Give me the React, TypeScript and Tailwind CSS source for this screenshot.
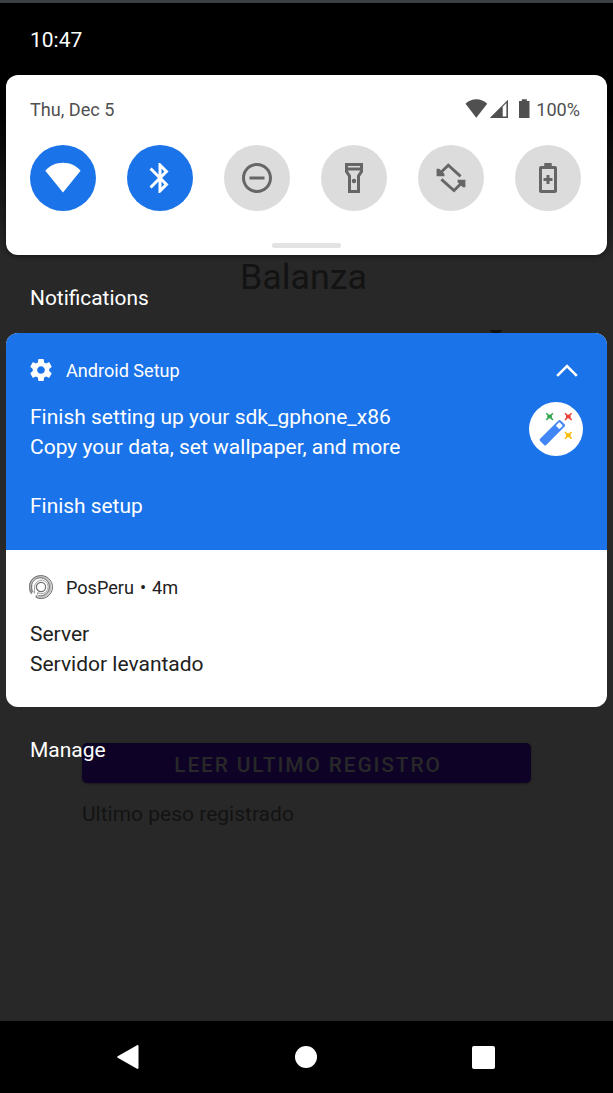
import type { ReactNode } from "react";

function Tile({ active, children }: { active?: boolean; children: ReactNode }) {
  return (
    <button
      className={`flex size-[66px] items-center justify-center rounded-full ${
        active ? "bg-[#1a73e8] text-white" : "bg-[#dcdcdc] text-[#666666]"
      }`}
    >
      <svg viewBox="0 0 24 24" className="size-[36px] overflow-visible" fill="currentColor">
        {children}
      </svg>
    </button>
  );
}

function Background() {
  return (
    <div className="absolute inset-x-0 top-[66px] flex h-[955px] flex-col items-center bg-[#282828] pt-[190px] text-[#131313]">
      <div className="h-[74px] text-[35.8px] leading-[42px] -translate-x-[3px]">Balanza</div>
      <div className="flex h-[345px] w-full justify-end pr-[110px]">
        <svg viewBox="0 0 14 7" className="h-[7px] w-[14px]">
          <path d="M0 0h14L7 7z" fill="#111" />
        </svg>
      </div>
      <div className="mt-[68px] flex h-[40px] w-[449px] shrink-0 items-center justify-center rounded-[5px] bg-[#0e0326] pl-[3px] pt-[3px] text-[20.9px] font-medium leading-[24px] tracking-[1.86px] text-[#282828] shadow-[0_1px_2px_#1a1a1a]">
        LEER ULTIMO REGISTRO
      </div>
      <div className="mt-[19px] w-[449px] text-[21px] leading-[25px]">Ultimo peso registrado</div>
    </div>
  );
}

export default function App() {
  return (
    <div
      className="relative h-[1093px] w-[613px] overflow-hidden bg-black text-[21px] leading-[24px]"
      style={{ fontFamily: 'Roboto, "Liberation Sans", sans-serif' }}
    >
      <Background />
      <div className="absolute inset-x-0 top-[66px] h-[190px] bg-linear-to-b from-black from-20% to-transparent" />
      <div className="relative flex h-full flex-col">
        <header className="flex h-[75px] flex-col border-t-[3px] border-[#3a3f43] bg-black pl-[30px] pt-[25px] text-white">
          10:47
        </header>

        <section className="mx-[6px] h-[180px] rounded-[12px] bg-white shadow-[0_1px_5px_rgba(0,0,0,0.5)]">
          <div className="flex items-center justify-between pl-[24px] pr-[27px] pt-[24px] text-[18.1px] leading-[22px] text-[#505050]">
            <span>Thu, Dec 5</span>
            <span className="flex items-center">
              <svg viewBox="0 0 65 22" className="mr-[6px] h-[22px] w-[65px]" fill="#505050">
                <path d="M.5 4.700C3.500 1.700 7 .2 11.300.2s7.900 1.500 10.900 4.500L11.300 18.800z" />
                <path fillRule="evenodd" d="M24.800 19 43 .8V19zM37.700 7.800V17.500H41.400V4.100z" />
                <path d="M54 2h2.800V.2h5V2h2.700v17H54z" />
              </svg>
              100%
            </span>
          </div>
          <div className="mt-[24px] flex justify-between pl-[24px] pr-[26px]">
            <Tile active>
              <path d="M.2 7.100C3.400 3.700 7.400 1.900 12 1.900s8.500 1.800 11.700 5.200L12 21.700z" />
            </Tile>
            <Tile active>
              <path d="M17.710 7.710 12 2h-1v7.590L6.410 5 5 6.410 10.590 12 5 17.590 6.410 19 11 14.410V22h1l5.710-5.710-4.300-4.290zM13 5.830l1.880 1.880L13 9.590zm1.880 10.460L13 18.170v-3.760z" />
            </Tile>
            <Tile>
              <path d="M7 11v2h10v-2zm5-9C6.480 2 2 6.480 2 12s4.480 10 10 10 10-4.480 10-10S17.520 2 12 2m0 18c-4.410 0-8-3.590-8-8s3.590-8 8-8 8 3.590 8 8-3.590 8-8 8" />
            </Tile>
            <Tile>
              <path d="M6 2v6l2 3v11h8V11l2-3V2zm10 2v1H8V4zm-2 6.400V20h-4v-9.600L8 7.400V7h8v.4z" />
              <circle cx="12" cy="14" r="1.500" />
            </Tile>
            <Tile>
              <path
                d="M18.400 10.900 10.200 3.500 4.500 9M5.600 12.900 14 20.300 19.600 14.800"
                fill="none"
                stroke="currentColor"
                strokeWidth="1.900"
              />
              <path d="M2.400 5.800h1.700l3.500 3.400v1.700H2.400zM21.600 18.200h-1.700l-3.500-3.400v-1.700h5.200z" />
            </Tile>
            <Tile>
              <path d="M16.670 4H14.500V2h-5v2H7.330C6.600 4 6 4.600 6 5.330v15.340C6 21.400 6.600 22 7.330 22h9.330c.74 0 1.340-.6 1.340-1.330V5.330C18 4.600 17.400 4 16.670 4M16 20H8V6h8zm-5-4h2v-2h2v-2h-2v-2h-2v2H9v2h2z" />
            </Tile>
          </div>
          <div className="mx-auto mt-[32px] h-[5px] w-[69px] rounded-[2px] bg-[#e3e3e3]" />
        </section>

        <h2 className="h-[78px] pl-[30px] pt-[31px] text-[20.9px] text-white">Notifications</h2>

        <main className="mx-[6px] h-[374px] overflow-hidden rounded-[12px] bg-white">
          <article className="h-[217px] bg-[#1a73e8] px-[24px] pt-[23px] text-white">
            <div className="flex h-[28px] items-center text-[18.1px]">
              <svg viewBox="2 2 20 20" className="size-[22px]" fill="white">
                <path d="M19.430 12.980c.04-.32.07-.64.07-.98s-.03-.66-.07-.98l2.110-1.650c.19-.15.24-.42.12-.64l-2-3.460c-.12-.22-.39-.3-.61-.22l-2.490 1c-.52-.4-1.080-.73-1.690-.98l-.38-2.650C14.460 2.180 14.250 2 14 2h-4c-.25 0-.46.18-.49.42l-.38 2.650c-.61.25-1.170.59-1.690.98l-2.490-1c-.23-.09-.49 0-.61.22l-2 3.460c-.13.22-.07.49.12.64l2.110 1.650c-.04.32-.07.65-.07.98s.03.66.07.98l-2.110 1.650c-.19.15-.24.42-.12.64l2 3.460c.12.22.39.3.61.22l2.490-1c.52.4 1.080.73 1.690.98l.38 2.650c.03.24.24.42.49.42h4c.25 0 .46-.18.49-.42l.38-2.650c.61-.25 1.170-.59 1.690-.98l2.490 1c.23.09.49 0 .61-.22l2-3.460c.12-.22.07-.49-.12-.64zM12 15.500c-1.930 0-3.500-1.570-3.500-3.500s1.570-3.500 3.500-3.500 3.500 1.570 3.500 3.500-1.570 3.500-3.500 3.500" />
              </svg>
              <span className="ml-[14px] pt-[2px]">Android Setup</span>
              <svg viewBox="0 0 22 13" className="ml-auto mr-[5.500px] h-[13px] w-[22px]">
                <path d="M1.200 11.800 11 2l9.800 9.800" fill="none" stroke="white" strokeWidth="2.600" />
              </svg>
            </div>
            <div className="flex justify-between pt-[18px]">
              <div className="pt-[1px] leading-[29.700px]">
                <p>Finish setting up your sdk_gphone_x86</p>
                <p>Copy your data, set wallpaper, and more</p>
              </div>
              <svg viewBox="0 0 54 54" className="size-[54px]">
                <circle cx="27" cy="27" r="27" fill="white" />
                <g transform="rotate(45 23 31)">
                  <rect x="18.700" y="16" width="8.600" height="29" rx="1.500" fill="#4285f4" />
                  <rect x="20.400" y="18" width="5.200" height="5.200" rx="1" fill="white" />
                </g>
                <g strokeWidth="1.500">
                  <path d="m17.300 11.300 6.600 6.600m0-6.600-6.600 6.600M18.300 14.600h4.600" stroke="#34a853" />
                  <circle cx="20.600" cy="14.600" r="2" fill="#34a853" />
                  <path d="m36 11.300 6.600 6.600m0-6.600L36 17.900M37 14.600h4.600" stroke="#ea4335" />
                  <circle cx="39.300" cy="14.600" r="2" fill="#ea4335" />
                  <path d="m36 30 6.600 6.600m0-6.600L36 36.600M37 33.300h4.600" stroke="#fbbc04" />
                  <circle cx="39.300" cy="33.300" r="2" fill="#fbbc04" />
                </g>
              </svg>
            </div>
            <p className="mt-[32px] text-[20.9px]">Finish setup</p>
          </article>
          <article className="px-[24px] pt-[23px] text-[#212121]">
            <div className="flex h-[28px] items-center text-[18.1px]">
              <svg viewBox="0 0 24 24" className="-ml-px size-[24px]" fill="none">
                <path d="M2.600 17.800A10.300 10.300 0 1 1 7 21.400" stroke="#c4c4c4" strokeWidth="2.600" />
                <g stroke="#6e6e6e" strokeWidth="1">
                  <path d="M2.700 18.800A11.500 11.500 0 1 1 7.200 22.500v-2.300" />
                  <path d="M2.700 18.800V12a9 9 0 0 1 .3-2" stroke="#8a8a8a" />
                  <path d="M4.300 17.300A9 9 0 1 1 9.500 20.600" />
                  <path d="M5.600 18.500V12a6.800 6.800 0 1 1 3 5.600v2.400" stroke="#a0a0a0" />
                  <circle cx="12" cy="12" r="4.600" strokeWidth="1.200" />
                </g>
              </svg>
              <span className="ml-[13px] flex gap-[6px] pt-[2px]">
                <span>PosPeru</span>
                <span>•</span>
                <span>4m</span>
              </span>
            </div>
            <div className="pt-[19px] leading-[29.500px]">
              <p>Server</p>
              <p>Servidor levantado</p>
            </div>
          </article>
        </main>

        <button className="ml-[30px] mt-[31px] self-start text-white">Manage</button>

        <nav className="mt-auto flex h-[72px] items-center justify-between bg-black pl-[117px] pr-[118px]">
          <svg viewBox="0 0 22 24" className="h-[24px] w-[22px]" fill="white">
            <path d="M.7 11.300 20 .2q1.500-.5 1.500 1v21.600q0 1.500-1.500 1L.7 12.700q-1-.7 0-1.400z" />
          </svg>
          <div className="ml-px size-[22px] rounded-full bg-white" />
          <div className="size-[23px] rounded-[2px] bg-white" />
        </nav>
      </div>
    </div>
  );
}
